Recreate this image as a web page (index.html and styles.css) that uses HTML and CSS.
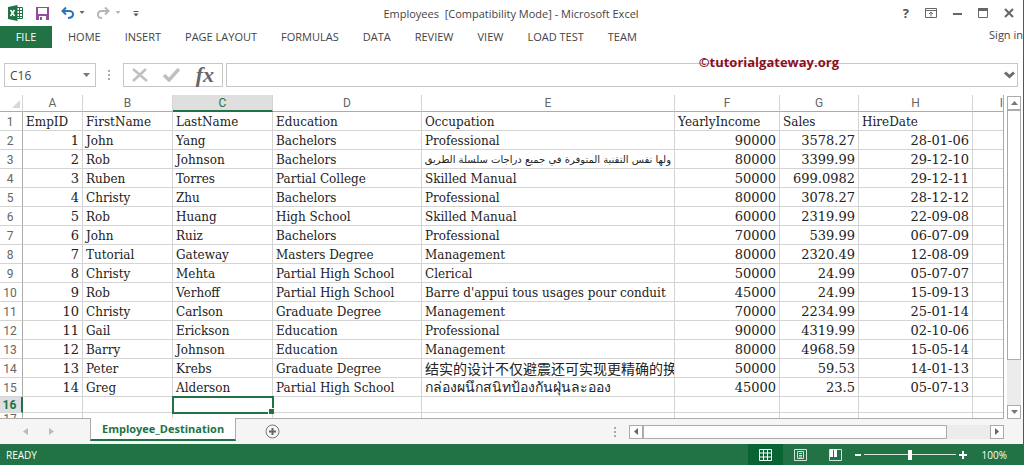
FILE: index.html
```
<!DOCTYPE html>
<html lang="en">
<head>
    <meta charset="UTF-8">
    <meta name="viewport" content="width=device-width, initial-scale=1.0">
    <title>Employees [Compatibility Mode] - Microsoft Excel</title>
    <link rel="stylesheet" href="styles.css">
</head>
<body>
<div class="app">
    <header class="titlebar">
        <div class="quick-access">
            <svg class="logo" width="16" height="16" viewBox="0 0 16 16">
                <path fill="#fff" stroke="#217346" d="M8.5 2.5h6v11h-6z"/>
                <path stroke="#217346" d="M9 5.500h5M9 8.500h5M9 11.500h5M11.500 3v10"/>
                <path fill="#217346" d="M0 2l9.500-2v16L0 14z"/>
                <path stroke="#fff" stroke-width="1.500" d="M2.500 5l4 6M6.500 5l-4 6"/>
            </svg>
            <button class="icon-btn save" aria-label="Save">
                <svg width="13" height="13" viewBox="0 0 13 13">
                    <path fill="#8f4f9f" d="M0 0h13v13H0z"/>
                    <path fill="#fff" d="M2 1h9v6H2zM3 9h7v4H3z"/>
                    <path fill="#8f4f9f" d="M4 10h2v3H4z"/>
                </svg>
            </button>
            <button class="icon-btn" aria-label="Undo">
                <svg width="24" height="12" viewBox="0 0 24 12">
                    <path fill="none" stroke="#2b72b9" stroke-width="2" d="M5 0.500L1.500 4 5 7.500M2 4h6c6 0 5 7-1 7"/>
                    <path fill="#666" d="M18.500 4h5L21 7z"/>
                </svg>
            </button>
            <button class="icon-btn redo" aria-label="Redo">
                <svg width="24" height="12" viewBox="0 0 24 12">
                    <path fill="none" stroke="#b5b5b5" stroke-width="2" d="M8 0.500L11.500 4 8 7.500M11 4H5c-6 0-5 7 0 7"/>
                    <path fill="#b5b5b5" d="M18.500 4h5L21 7z"/>
                </svg>
            </button>
            <button class="icon-btn" aria-label="Customize Quick Access Toolbar">
                <svg width="6" height="7" viewBox="0 0 6 7">
                    <path fill="#555" d="M0.500 1h5v1h-5zM0.500 3.500h5L3 6.500z"/>
                </svg>
            </button>
        </div>
        <h1 class="title">Employees&nbsp; [Compatibility Mode] - Microsoft Excel</h1>
        <div class="window-controls">
            <button class="icon-btn help" aria-label="Help">?</button>
            <button class="icon-btn" aria-label="Ribbon Display Options">
                <svg width="12" height="10" viewBox="0 0 12 10">
                    <path fill="none" stroke="#666" d="M.5.5h11v9H.5zM1 2.500h10M6 8.500V4M4 6l2-2 2 2"/>
                </svg>
            </button>
            <button class="icon-btn" aria-label="Minimize">
                <svg width="9" height="10" viewBox="0 0 9 10"><path fill="#666" d="M0 5h9v2H0z"/></svg>
            </button>
            <button class="icon-btn" aria-label="Restore">
                <svg width="10" height="10" viewBox="0 0 10 10">
                    <path fill="none" stroke="#666" d="M.5 1h9v8.500h-9z"/>
                    <path fill="#666" d="M0 0h10v3H0z"/>
                </svg>
            </button>
            <button class="icon-btn" aria-label="Close">
                <svg width="10" height="10" viewBox="0 0 10 10"><path stroke="#666" stroke-width="2" d="M1 1l8 8M9 1L1 9"/></svg>
            </button>
        </div>
    </header>

    <nav class="ribbon">
        <a class="file" href="#">FILE</a>
        <a href="#">HOME</a>
        <a href="#">INSERT</a>
        <a href="#">PAGE LAYOUT</a>
        <a href="#">FORMULAS</a>
        <a href="#">DATA</a>
        <a href="#">REVIEW</a>
        <a href="#">VIEW</a>
        <a href="#">LOAD TEST</a>
        <a href="#">TEAM</a>
        <a class="sign-in" href="#">Sign in</a>
    </nav>

    <div class="formula-bar">
        <div class="name-box">
            <input type="text" aria-label="Name Box" value="C16">
            <button class="icon-btn" aria-label="Show names">
                <svg width="7" height="4" viewBox="0 0 7 4"><path fill="#777" d="M0 0h7L3.500 4z"/></svg>
            </button>
        </div>
        <svg class="grip" width="2" height="10" viewBox="0 0 2 10"><path fill="#aaa" d="M0 0h2v2H0zM0 4h2v2H0zM0 8h2v2H0z"/></svg>
        <div class="formula-buttons">
            <button class="icon-btn" aria-label="Cancel">
                <svg width="16" height="14" viewBox="0 0 16 14"><path stroke="#c0c0c0" stroke-width="2.500" d="M1 1l14 12M14 1L1 13"/></svg>
            </button>
            <button class="icon-btn" aria-label="Enter">
                <svg width="17" height="14" viewBox="0 0 17 14"><path fill="none" stroke="#c0c0c0" stroke-width="3.500" d="M1 7l5 5L16 1"/></svg>
            </button>
            <button class="icon-btn fx" aria-label="Insert Function">fx</button>
        </div>
        <div class="formula-box">
            <input type="text" aria-label="Formula Bar">
            <button class="icon-btn" aria-label="Expand Formula Bar">
                <svg width="11" height="8" viewBox="0 0 11 8"><path fill="none" stroke="#6b6b6b" stroke-width="3" d="M1 1.500l4.500 4 4.500-4"/></svg>
            </button>
        </div>
        <div class="watermark">©tutorialgateway.org</div>
    </div>

    <main class="workspace">
        <div class="sheet">
            <table>
                <colgroup>
                    <col class="col-row"><col class="col-a"><col class="col-b"><col class="col-c"><col class="col-d">
                    <col><col class="col-f"><col class="col-g"><col class="col-h"><col class="col-i">
                </colgroup>
                <thead>
                    <tr>
                        <th class="corner"><svg width="8" height="8" viewBox="0 0 8 8"><path fill="#d8d8d8" d="M8 0v8H0z"/></svg></th>
                        <th>A</th><th>B</th><th class="active">C</th><th>D</th><th>E</th><th>F</th><th>G</th><th>H</th><th class="last">I</th>
                    </tr>
                </thead>
                <tbody>
                    <tr><th>1</th><td>EmpID</td><td>FirstName</td><td>LastName</td><td>Education</td><td>Occupation</td><td>YearlyIncome</td><td>Sales</td><td>HireDate</td><td></td></tr>
                    <tr><th>2</th><td class="num">1</td><td>John</td><td>Yang</td><td>Bachelors</td><td>Professional</td><td class="num">90000</td><td class="num">3578.27</td><td class="num">28-01-06</td><td></td></tr>
                    <tr><th>3</th><td class="num">2</td><td>Rob</td><td>Johnson</td><td>Bachelors</td><td class="arabic" lang="ar" dir="rtl">ولها نفس التقنية المتوفرة في جميع دراجات سلسلة الطريق</td><td class="num">80000</td><td class="num">3399.99</td><td class="num">29-12-10</td><td></td></tr>
                    <tr><th>4</th><td class="num">3</td><td>Ruben</td><td>Torres</td><td>Partial College</td><td>Skilled Manual</td><td class="num">50000</td><td class="num">699.0982</td><td class="num">29-12-11</td><td></td></tr>
                    <tr><th>5</th><td class="num">4</td><td>Christy</td><td>Zhu</td><td>Bachelors</td><td>Professional</td><td class="num">80000</td><td class="num">3078.27</td><td class="num">28-12-12</td><td></td></tr>
                    <tr><th>6</th><td class="num">5</td><td>Rob</td><td>Huang</td><td>High School</td><td>Skilled Manual</td><td class="num">60000</td><td class="num">2319.99</td><td class="num">22-09-08</td><td></td></tr>
                    <tr><th>7</th><td class="num">6</td><td>John</td><td>Ruiz</td><td>Bachelors</td><td>Professional</td><td class="num">70000</td><td class="num">539.99</td><td class="num">06-07-09</td><td></td></tr>
                    <tr><th>8</th><td class="num">7</td><td>Tutorial</td><td>Gateway</td><td>Masters Degree</td><td>Management</td><td class="num">80000</td><td class="num">2320.49</td><td class="num">12-08-09</td><td></td></tr>
                    <tr><th>9</th><td class="num">8</td><td>Christy</td><td>Mehta</td><td>Partial High School</td><td>Clerical</td><td class="num">50000</td><td class="num">24.99</td><td class="num">05-07-07</td><td></td></tr>
                    <tr><th>10</th><td class="num">9</td><td>Rob</td><td>Verhoff</td><td>Partial High School</td><td>Barre d'appui tous usages pour conduit</td><td class="num">45000</td><td class="num">24.99</td><td class="num">15-09-13</td><td></td></tr>
                    <tr><th>11</th><td class="num">10</td><td>Christy</td><td>Carlson</td><td>Graduate Degree</td><td>Management</td><td class="num">70000</td><td class="num">2234.99</td><td class="num">25-01-14</td><td></td></tr>
                    <tr><th>12</th><td class="num">11</td><td>Gail</td><td>Erickson</td><td>Education</td><td>Professional</td><td class="num">90000</td><td class="num">4319.99</td><td class="num">02-10-06</td><td></td></tr>
                    <tr><th>13</th><td class="num">12</td><td>Barry</td><td>Johnson</td><td>Education</td><td>Management</td><td class="num">80000</td><td class="num">4968.59</td><td class="num">15-05-14</td><td></td></tr>
                    <tr><th>14</th><td class="num">13</td><td>Peter</td><td>Krebs</td><td>Graduate Degree</td><td class="chinese" lang="zh">结实的设计不仅避震还可实现更精确的换</td><td class="num">50000</td><td class="num">59.53</td><td class="num">14-01-13</td><td></td></tr>
                    <tr><th>15</th><td class="num">14</td><td>Greg</td><td>Alderson</td><td>Partial High School</td><td class="thai" lang="th">กล่องผนึกสนิทป้องกันฝุ่นละออง</td><td class="num">45000</td><td class="num">23.5</td><td class="num">05-07-13</td><td></td></tr>
                    <tr class="short"><th class="active">16</th><td></td><td></td><td class="selected"></td><td></td><td></td><td></td><td></td><td></td><td></td></tr>
                    <tr class="cut"><th>17</th><td></td><td></td><td></td><td></td><td></td><td></td><td></td><td></td><td></td></tr>
                </tbody>
            </table>
        </div>
        <div class="scroll vertical">
            <button class="icon-btn" aria-label="Scroll up"><svg width="7" height="4" viewBox="0 0 7 4"><path fill="#777" d="M0 4h7L3.500 0z"/></svg></button>
            <div class="thumb"></div>
            <div class="track"></div>
            <button class="icon-btn" aria-label="Scroll down"><svg width="7" height="4" viewBox="0 0 7 4"><path fill="#777" d="M0 0h7L3.500 4z"/></svg></button>
        </div>
    </main>

    <div class="sheet-tabs">
        <div class="tab-arrows">
            <button class="icon-btn" aria-label="Previous sheet"><svg width="5" height="7" viewBox="0 0 5 7"><path fill="#bbb" d="M5 0v7L0 3.500z"/></svg></button>
            <button class="icon-btn" aria-label="Next sheet"><svg width="5" height="7" viewBox="0 0 5 7"><path fill="#bbb" d="M0 0v7l5-3.500z"/></svg></button>
        </div>
        <button class="sheet-tab">Employee_Destination</button>
        <button class="icon-btn new-sheet" aria-label="New sheet">
            <svg width="15" height="15" viewBox="0 0 15 15">
                <circle cx="7.500" cy="7.500" r="6.500" fill="none" stroke="#777"/>
                <path fill="#666" d="M6.500 4h2v7h-2zM4 6.500h7v2H4z"/>
            </svg>
        </button>
        <svg class="grip" width="2" height="10" viewBox="0 0 2 10"><path fill="#aaa" d="M0 0h2v2H0zM0 4h2v2H0zM0 8h2v2H0z"/></svg>
        <div class="scroll horizontal">
            <button class="icon-btn" aria-label="Scroll left"><svg width="4" height="7" viewBox="0 0 4 7"><path fill="#666" d="M4 0v7L0 3.500z"/></svg></button>
            <div class="thumb"></div>
            <div class="track"></div>
            <button class="icon-btn" aria-label="Scroll right"><svg width="4" height="7" viewBox="0 0 4 7"><path fill="#666" d="M0 0v7l4-3.500z"/></svg></button>
        </div>
    </div>

    <footer class="status">
        <span class="ready">READY</span>
        <button class="view current" aria-label="Normal view">
            <svg width="13" height="12" viewBox="0 0 13 12"><path fill="none" stroke="#fff" d="M.5.5h12v11H.5zM4.500 0v12M8.500 0v12M0 4h13M0 8h13"/></svg>
        </button>
        <button class="view" aria-label="Page Layout view">
            <svg width="13" height="12" viewBox="0 0 13 12"><path fill="none" stroke="#d5e5db" d="M.5.5h12v11H.5zM3.500 2.500h6v7h-6zM5 4.500h3M5 6.500h3M5 8h3"/></svg>
        </button>
        <button class="view" aria-label="Page Break Preview">
            <svg width="13" height="12" viewBox="0 0 13 12">
                <path fill="none" stroke="#d5e5db" d="M.5.5h12v11H.5z"/>
                <path fill="#fff" d="M1 0h3v8H1zM5 0h3v8H5z"/>
            </svg>
        </button>
        <div class="zoom">
            <button class="icon-btn" aria-label="Zoom out"><svg width="6" height="8" viewBox="0 0 6 8"><path fill="#fff" d="M0 3h6v2H0z"/></svg></button>
            <input type="range" aria-label="Zoom" min="0" max="100" value="50">
            <button class="icon-btn" aria-label="Zoom in"><svg width="8" height="8" viewBox="0 0 8 8"><path fill="#fff" d="M0 3h8v2H0zM3 0h2v8H3z"/></svg></button>
            <span class="percent">100%</span>
        </div>
    </footer>
</div>
</body>
</html>
```
FILE: styles.css
```
* {
    box-sizing: border-box;
}
body {
    margin: 0;
    font-family: "Open Sans", "Noto Sans", sans-serif;
    font-size: 11px;
    color: #444;
    background: #fff;
}
svg {
    display: block;
    flex: none;
}
button {
    font: inherit;
    padding: 0;
    border: none;
    background: none;
    cursor: pointer;
}
input {
    font: inherit;
    color: inherit;
    min-width: 0;
    padding: 0;
    border: none;
    background: none;
    outline: none;
}
.icon-btn {
    display: flex;
    align-items: center;
    justify-content: center;
    flex: none;
}
.app {
    display: flex;
    flex-direction: column;
    height: 100vh;
    border-right: 1px solid #217346;
}

/* Title bar */
.titlebar {
    display: grid;
    grid-template-columns: 1fr auto 1fr;
    align-items: center;
    height: 26px;
    padding: 0 9px 0 8px;
}
.quick-access {
    display: flex;
    align-items: center;
    gap: 12px;
}
.title {
    margin: 0;
    font-size: 11px;
    font-weight: normal;
}
.window-controls {
    display: flex;
    align-items: center;
    justify-content: flex-end;
    gap: 16px;
}
.help {
    font-size: 13px;
    font-weight: bold;
    line-height: 14px;
    color: #555;
}

/* Ribbon tabs */
.ribbon {
    display: flex;
    height: 22px;
    line-height: 22px;
    margin-bottom: 15px;
}
.ribbon a {
    margin-left: 24px;
    color: #444;
    text-decoration: none;
    white-space: nowrap;
}
.ribbon .file {
    width: 52px;
    margin: 0 -8px 0 0;
    color: #fff;
    text-align: center;
    background: #217346;
}
.ribbon .sign-in {
    margin-left: auto;
    line-height: 17px;
}

/* Formula bar */
.formula-bar {
    position: relative;
    display: flex;
    align-items: center;
    height: 24px;
    padding: 0 5px 0 4px;
    margin-bottom: 8px;
}
.name-box,
.formula-buttons,
.formula-box {
    display: flex;
    align-items: center;
    height: 24px;
    border: 1px solid #c6c6c6;
}
.name-box {
    width: 92px;
    padding: 0 5px;
}
.name-box input,
.formula-box input {
    flex: 1;
    font-size: 12px;
}
.formula-bar .grip {
    margin: 0 13px 0 12px;
}
.formula-buttons {
    justify-content: space-between;
    width: 100px;
    padding: 0 8px;
    margin-right: 3px;
}
.fx {
    font-family: "Liberation Serif", serif;
    font-size: 22px;
    font-style: italic;
    font-weight: bold;
    line-height: 20px;
    color: #666;
}
.formula-box {
    flex: 1;
    padding-right: 2px;
}
.watermark {
    position: absolute;
    top: -10px;
    right: 184px;
    font-size: 13px;
    font-weight: bold;
    line-height: 18px;
    color: #8b0f22;
}

/* Grid */
.workspace {
    display: flex;
    flex: 1;
    min-height: 0;
    background: #fff;
}
.sheet {
    flex: 1;
    min-width: 0;
    overflow: hidden;
    border-bottom: 1px solid #ababab;
}
table {
    width: 100%;
    table-layout: fixed;
    border-collapse: separate;
    border-spacing: 0;
    border-right: 1px solid #ababab;
}
.col-row { width: 23px; }
.col-a { width: 60px; }
.col-b { width: 90px; }
.col-c { width: 100px; }
.col-d { width: 149px; }
.col-f { width: 105px; }
.col-g { width: 79px; }
.col-h { width: 114px; }
.col-i { width: 30px; }
th,
td {
    height: 19px;
    overflow: hidden;
    white-space: nowrap;
    border-right: 1px solid #d4d4d4;
    border-bottom: 1px solid #d4d4d4;
}
th {
    padding: 0;
    font-family: Roboto, sans-serif;
    font-size: 12px;
    font-weight: normal;
    line-height: 14px;
    text-align: center;
    color: #666;
}
thead th {
    height: 17px;
    border-bottom-color: #ababab;
}
tbody th {
    border-right-color: #ababab;
    padding: 1px 2px 0 0;
}
.corner svg {
    margin: 2px 0 0 12px;
}
th.last {
    text-align: right;
    border-right: none;
}
th.active {
    color: #217346;
    background: #dfdfdf;
}
thead th.active {
    border-bottom: 2px solid #217346;
}
tbody th.active {
    font-weight: bold;
    border-right: 2px solid #217346;
}
td {
    padding: 2px 3px 0;
    font-family: "DejaVu Serif", serif;
    font-size: 12px;
    line-height: 16px;
    color: #222;
}
td:last-child {
    border-right: none;
}
.num {
    font-size: 13px;
    text-align: right;
}
.arabic {
    font-family: "DejaVu Sans", sans-serif;
    font-size: 10px;
}
.chinese {
    font-family: "Noto Sans CJK SC", sans-serif;
    font-size: 14px;
}
.thai {
    font-family: "Noto Sans", sans-serif;
    font-size: 14px;
}
.chinese,
.thai {
    padding-top: 0;
}
.short th,
.short td {
    height: 16px;
    padding-top: 0;
}
.cut th {
    padding-top: 0;
    line-height: 12px;
    vertical-align: top;
}
.selected {
    position: relative;
    overflow: visible;
    outline: 2px solid #217346;
    outline-offset: -1px;
}
.selected::after {
    content: "";
    position: absolute;
    right: -2px;
    bottom: -2px;
    width: 5px;
    height: 5px;
    border: 1px solid #fff;
    border-width: 1px 0 0 1px;
    background: #217346;
}

/* Scroll bars */
.scroll {
    display: flex;
}
.scroll .icon-btn,
.thumb {
    border: 1px solid #ababab;
    background: #fff;
}
.scroll .icon-btn {
    width: 14px;
    height: 14px;
}
.track {
    background: #ececec;
}
.vertical {
    flex-direction: column;
    width: 14px;
    margin: 1px 2px 0 3px;
}
.vertical .thumb {
    flex: 250;
}
.vertical .track {
    flex: 45;
}
.horizontal {
    width: calc(37% + 4px);
    margin-left: 13px;
}
.horizontal .thumb {
    flex: 305;
}
.horizontal .track {
    flex: 43;
}

/* Sheet tabs */
.sheet-tabs {
    display: flex;
    align-items: center;
    height: 25px;
    padding-right: 19px;
    background: #f5f5f5;
}
.tab-arrows {
    display: flex;
    gap: 21px;
    width: 90px;
    padding-left: 23px;
}
.sheet-tab {
    align-self: flex-start;
    height: 23px;
    padding: 0 11px;
    margin-top: -1px;
    font-size: 11px;
    font-weight: bold;
    color: #217346;
    background: #fff;
    border: 1px solid #ababab;
    border-width: 0 1px;
    border-bottom: 2px solid #217346;
}
.new-sheet {
    margin-left: 29px;
}
.sheet-tabs .grip {
    margin-left: auto;
}

/* Status bar */
.status {
    display: flex;
    align-items: center;
    height: 21px;
    padding-right: 16px;
    color: #fff;
    background: #217346;
}
.ready {
    margin: 0 auto 0 6px;
    font-size: 10px;
}
.view {
    display: flex;
    align-items: center;
    justify-content: center;
    width: 35px;
    height: 21px;
}
.view.current {
    background: #0a6332;
}
.zoom {
    display: flex;
    align-items: center;
    gap: 3px;
    margin-left: 2px;
}
.zoom input {
    width: 92px;
    height: 12px;
    margin: 0;
    appearance: none;
    background: linear-gradient(#d5e5db, #d5e5db) center / 100% 1px no-repeat;
}
.zoom input::-webkit-slider-thumb {
    appearance: none;
    width: 4px;
    height: 10px;
    background: #fff;
}
.percent {
    margin-left: 12px;
    font-size: 10px;
}
```
